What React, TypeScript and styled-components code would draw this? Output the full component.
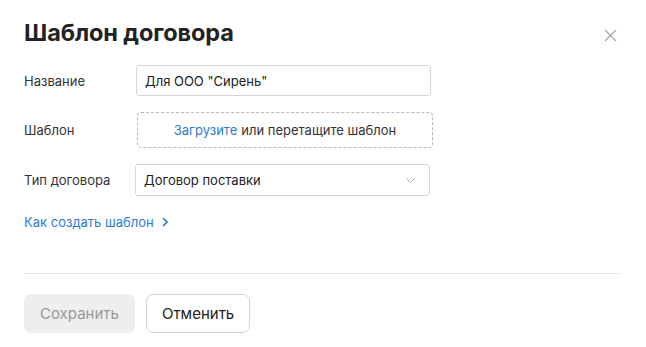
import styled, { createGlobalStyle } from 'styled-components';

const GlobalStyle = createGlobalStyle`
  html, body {
    margin: 0;
    padding: 0;
    background: #fff;
  }
  body {
    font-family: Inter, "Noto Sans", Arial, sans-serif;
    color: #333;
    -webkit-font-smoothing: antialiased;
  }
  * { box-sizing: border-box; }
`;

const Dialog = styled.div`
  width: 646px;
  height: 347px;
  padding: 16px 26px 0 24px;
  background: #fff;
  display: flex;
  flex-direction: column;
`;

const Header = styled.div`
  display: flex;
  align-items: center;
  justify-content: space-between;
  height: 32px;
`;

const Title = styled.h2`
  margin: 0;
  font-size: 23.5px;
  font-weight: 700;
  color: #222;
  letter-spacing: -0.1px;
`;

const CloseButton = styled.button`
  width: 20px;
  height: 20px;
  padding: 0;
  margin-top: 6px;
  border: none;
  background: none;
  display: flex;
  align-items: center;
  justify-content: center;
  cursor: pointer;
`;

const Form = styled.div`
  margin-top: 17px;
  display: flex;
  flex-direction: column;
  gap: 16px;
`;

const Row = styled.div`
  display: flex;
  align-items: center;
`;

const Label = styled.div`
  width: 112px;
  font-size: 13px;
  color: #333;
`;

const Input = styled.div`
  width: 295px;
  height: 31px;
  border: 1px solid #d6d6d6;
  border-radius: 3px;
  padding: 0 8px;
  display: flex;
  align-items: center;
  font-size: 13px;
  color: #222;
`;

const Dropzone = styled.div`
  width: 296px;
  height: 36px;
  margin-left: 1px;
  border: 1px dashed #b8b8b8;
  border-radius: 4px;
  display: flex;
  align-items: center;
  justify-content: center;
  font-size: 13px;
  color: #333;
`;

const Accent = styled.span`
  color: #2b7bd6;
  margin-right: 4px;
`;

const Select = styled.div`
  width: 295px;
  height: 32px;
  margin-left: -1px;
  border: 1px solid #d6d6d6;
  border-radius: 3px;
  padding: 0 14px 0 8px;
  display: flex;
  align-items: center;
  justify-content: space-between;
  font-size: 13px;
  color: #222;
`;

const HelpLink = styled.a`
  margin-top: 18px;
  display: inline-flex;
  align-items: center;
  gap: 8px;
  font-size: 13px;
  color: #2b7bd6;
  text-decoration: none;
  align-self: flex-start;
`;

const Divider = styled.hr`
  margin: 43px 0 0;
  border: none;
  border-top: 1px solid #e6e6e6;
  width: 596px;
`;

const Footer = styled.div`
  margin-top: 20px;
  display: flex;
  gap: 11px;
`;

const Button = styled.button<{ $disabled?: boolean }>`
  height: 39px;
  padding: 0 15px;
  border-radius: 7px;
  font-family: inherit;
  font-size: 15px;
  border: 1px solid ${({ $disabled }) => ($disabled ? '#eeeeee' : '#d2d2d2')};
  background: ${({ $disabled }) => ($disabled ? '#eeeeee' : '#fff')};
  color: ${({ $disabled }) => ($disabled ? '#999' : '#222')};
  cursor: ${({ $disabled }) => ($disabled ? 'default' : 'pointer')};
`;

export default function App() {
  return (
    <>
      <GlobalStyle />
      <Dialog>
        <Header>
          <Title>Шаблон договора</Title>
          <CloseButton aria-label="Закрыть">
            <svg width="13" height="13" viewBox="0 0 13 13">
              <path d="M1 1L12 12M12 1L1 12" stroke="#a8a8a8" strokeWidth="1.3" />
            </svg>
          </CloseButton>
        </Header>
        <Form>
          <Row>
            <Label>Название</Label>
            <Input>Для ООО "Сирень"</Input>
          </Row>
          <Row>
            <Label>Шаблон</Label>
            <Dropzone>
              <Accent>Загрузите</Accent>или перетащите шаблон
            </Dropzone>
          </Row>
          <Row>
            <Label>Тип договора</Label>
            <Select>
              Договор поставки
              <svg width="9" height="5" viewBox="0 0 9 5">
                <path d="M0.5 0.5L4.5 4.5L8.5 0.5" stroke="#a8a8a8" strokeWidth="1" fill="none" />
              </svg>
            </Select>
          </Row>
        </Form>
        <HelpLink href="#">
          Как создать шаблон
          <svg width="6" height="10" viewBox="0 0 6 10">
            <path d="M1 1L5 5L1 9" stroke="#2b7bd6" strokeWidth="1.6" fill="none" />
          </svg>
        </HelpLink>
        <Divider />
        <Footer>
          <Button $disabled>Сохранить</Button>
          <Button>Отменить</Button>
        </Footer>
      </Dialog>
    </>
  );
}
